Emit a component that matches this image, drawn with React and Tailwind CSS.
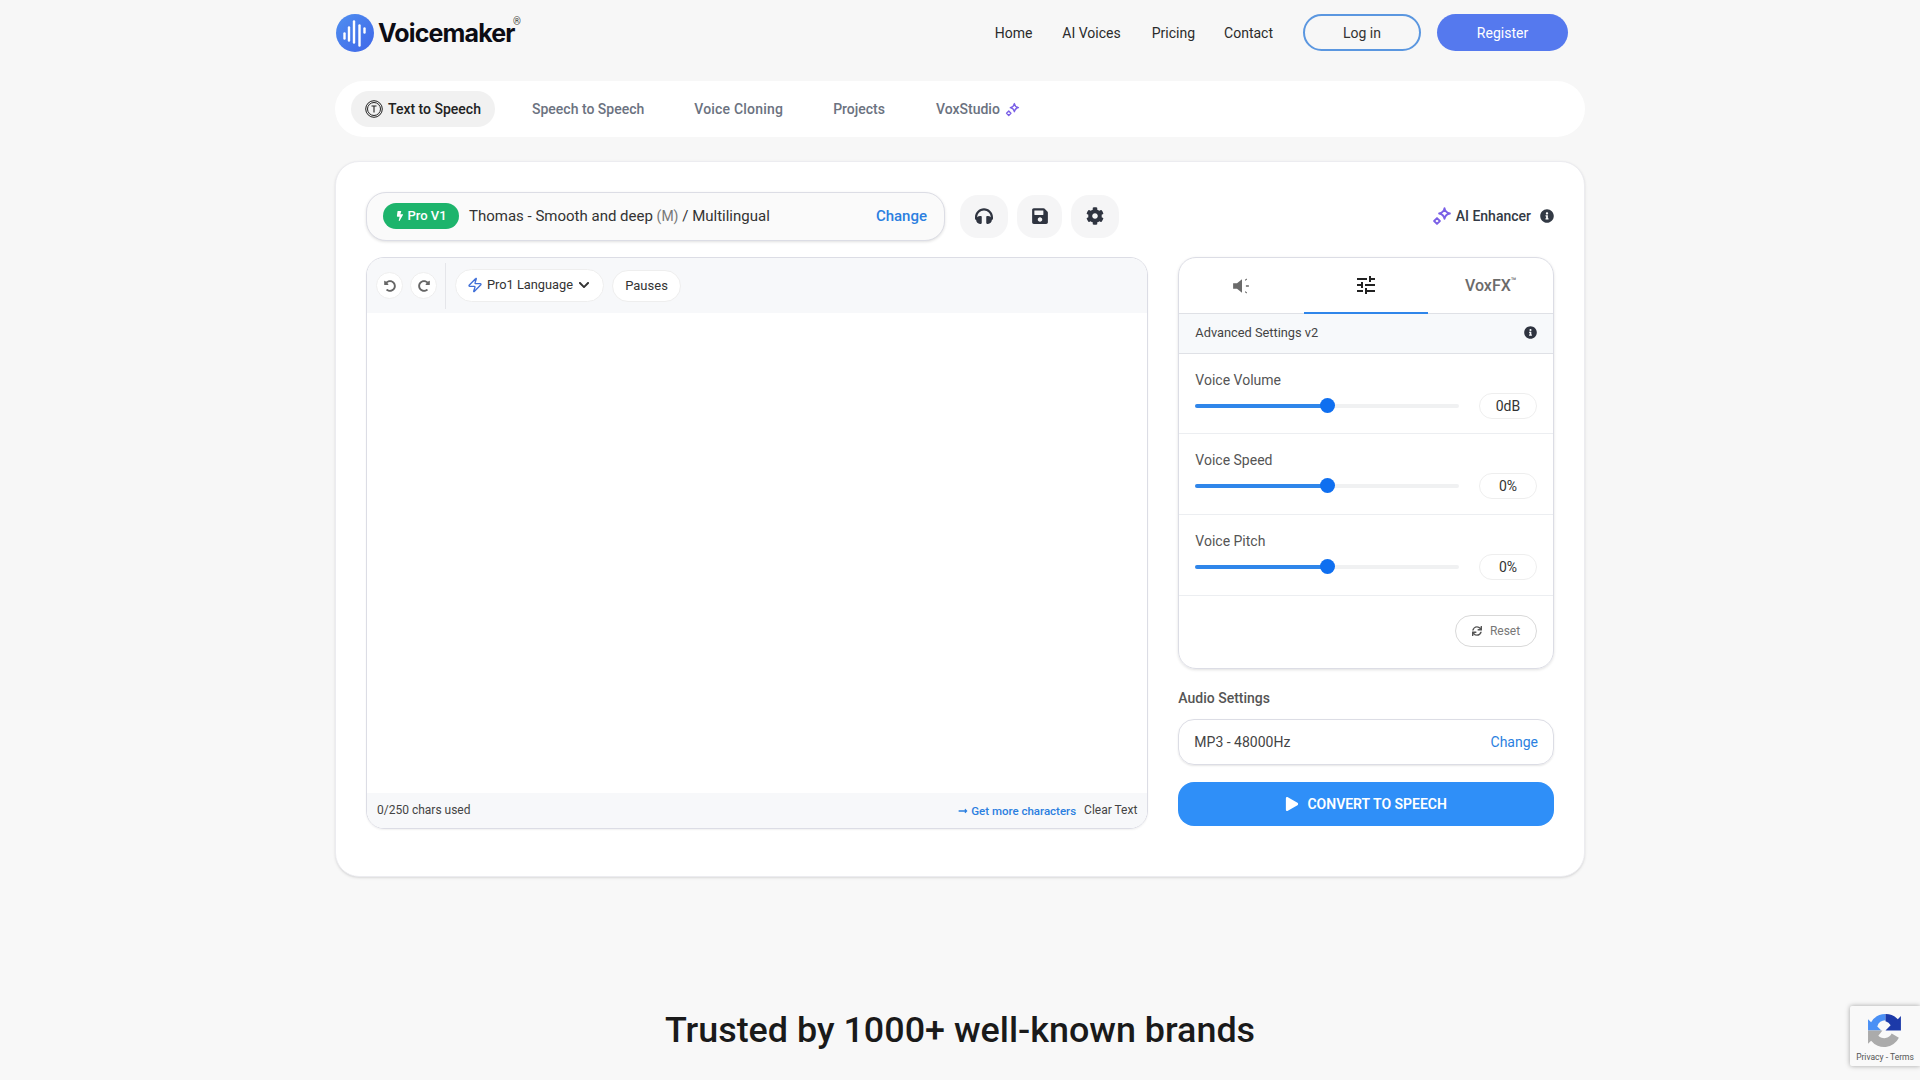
import React from 'react';
import { FaHeadphones, FaSave, FaCog, FaInfoCircle, FaSync, FaPlay, FaLongArrowAltRight, FaChevronDown, FaBolt, FaUndoAlt, FaRedoAlt } from 'react-icons/fa';
import { MdTune } from 'react-icons/md';
import { Zap } from 'lucide-react';

const Sparkle = ({ className }) => (
    <svg viewBox="0 0 24 24" className={className} fill="none" stroke="currentColor" strokeWidth="2.2" strokeLinejoin="round">
        <path d="M15 2.5c.6 3.6 2.5 5.7 6.5 6.5-4 .8-5.9 2.9-6.5 6.5-.6-3.6-2.5-5.7-6.5-6.5 4-.8 5.9-2.9 6.5-6.5z" />
        <path d="M6 14.5l3.5 3.5-3.5 3.5-3.5-3.5z" />
    </svg>
);

const LogoMark = () => (
    <svg viewBox="0 0 38 38" className="w-[38px] h-[38px] shrink-0">
        <defs>
            <linearGradient id="logoFill" x1="0" y1="0" x2="1" y2="1">
                <stop offset="0" stopColor="#4f8ff0" />
                <stop offset="1" stopColor="#3f66e8" />
            </linearGradient>
        </defs>
        <circle cx="19" cy="19" r="19" fill="url(#logoFill)" />
        <g stroke="#fff" strokeWidth="2.4" strokeLinecap="round">
            <path d="M8.5 19.5v5" />
            <path d="M13 13.5v13" />
            <path d="M18 7.5v21" />
            <path d="M23.5 11.5v20" />
            <path d="M28.5 14.5v4" />
        </g>
    </svg>
);

const TextCircle = () => (
    <svg viewBox="0 0 18 18" className="w-[18px] h-[18px]" fill="none" stroke="#222">
        <circle cx="9" cy="9" r="8.3" strokeWidth="1" />
        <circle cx="9" cy="9" r="6.5" strokeWidth="1" />
        <path d="M6.5 6h5M9 6v6.5" strokeWidth="1.1" />
    </svg>
);

const VolumeIcon = () => (
    <svg viewBox="0 0 18 18" className="w-5 h-5" fill="#6b6b6b">
        <path d="M1 6.5h3.5L9 3v12l-4.5-3.500H1z" />
        <path d="M11.5 3.5l1.5-1.2.6.8-1.5 1.2zM12.5 8.4h2.7v1.2h-2.700zM11.5 14.5l1.500 1.200.6-.8-1.500-1.200z" />
    </svg>
);

const sliders = [
    { label: 'Voice Volume', value: '0dB', rowClass: 'h-[80px]' },
    { label: 'Voice Speed', value: '0%', rowClass: 'h-[81px]' },
    { label: 'Voice Pitch', value: '0%', rowClass: 'h-[81px]' },
];

const App = () => {
    return (
        <div className="relative h-[1080px] overflow-hidden bg-[linear-gradient(#f7f7f7_710px,#f8f8f8_710px)] font-['Roboto',sans-serif]">
            <div className="w-[1250px] ml-[335px]">
                {/* header */}
                <header className="h-[65px] flex items-center">
                    <div className="ml-px flex items-center gap-[4px] relative">
                        <LogoMark />
                        <span className="pt-[2px] font-['Inter',sans-serif] font-bold text-[25px] tracking-[-0.85px] text-[#0c0c14]">Voicemaker</span>
                        <span className="absolute left-[177px] top-[1px] text-[10px] text-[#444]">®</span>
                    </div>
                    <nav className="ml-auto flex items-center text-sm text-[#2b2b2b] mr-[17px]">
                        <a className="mr-[30px]">Home</a>
                        <a className="mr-[31px]">AI Voices</a>
                        <a className="mr-[29px]">Pricing</a>
                        <a className="mr-[30px]">Contact</a>
                        <button className="w-[118px] h-[37px] rounded-full border-2 border-[#5b97e0] text-sm text-[#333] mr-4">Log in</button>
                        <button className="w-[131px] h-[37px] rounded-full bg-[#5579ee] text-sm text-white">Register</button>
                    </nav>
                </header>

                {/* product tabs */}
                <div className="mt-4 h-14 bg-white rounded-[28px] flex items-center pl-4 text-sm font-medium text-[#6b7280]">
                    <div className="h-[36px] w-[144px] rounded-full bg-[#f1f1f1] flex items-center justify-center gap-[5px] text-[#222]">
                        <TextCircle />
                        <span>Text to Speech</span>
                    </div>
                    <span className="ml-[37px]">Speech to Speech</span>
                    <span className="ml-[50px] tracking-[0.2px]">Voice Cloning</span>
                    <span className="ml-[50px]">Projects</span>
                    <span className="ml-[51px] flex items-center gap-[5px]">
                        VoxStudio
                        <Sparkle className="w-[15px] h-[15px] text-[#7a5fe6]" />
                    </span>
                </div>

                {/* main card */}
                <div className="mt-6 h-[716px] bg-white rounded-[24px] border border-[#ececf0] shadow-sm pt-[29px] px-[30px]">
                    <div className="flex items-center h-[50px]">
                        <div className="w-[579px] h-[49px] rounded-[20px] border border-[#dcdde5] bg-[#fafafa] shadow-[0_1px_3px_rgba(0,0,0,0.12)] flex items-center pl-4 pr-[17px]">
                            <span className="w-[76px] h-[26px] rounded-full bg-[#1db46c] text-white text-[13px] font-medium flex items-center justify-center gap-[2px]">
                                <FaBolt className="w-[10px] h-[10px]" /> Pro V1
                            </span>
                            <span className="ml-[10px] text-[15px] text-[#333]">
                                Thomas - Smooth and deep <span className="text-[#777] text-[14px]">(M)</span> / Multilingual
                            </span>
                            <span className="ml-auto text-[15px] font-medium text-[#2b7fe0]">Change</span>
                        </div>
                        <div className="ml-[15px] flex items-center gap-[9px]">
                            <span className="w-[48px] h-[43px] rounded-[18px] bg-[#f5f5f6] flex items-center justify-center text-[#2f3440]"><FaHeadphones className="w-[18px] h-[18px]" /></span>
                            <span className="w-[45px] h-[43px] rounded-[18px] bg-[#f5f5f6] flex items-center justify-center text-[#2f3440]"><FaSave className="w-[18px] h-[18px]" /></span>
                            <span className="w-[48px] h-[43px] rounded-[18px] bg-[#f5f5f6] flex items-center justify-center text-[#2f3440]"><FaCog className="w-[18px] h-[18px]" /></span>
                        </div>
                        <div className="ml-auto flex items-center text-sm font-medium text-[#333a45]">
                            <Sparkle className="w-[20px] h-[20px] text-[#7a5fe6] mr-[4px]" />
                            AI Enhancer
                            <FaInfoCircle className="w-[14px] h-[14px] ml-[9px]" />
                        </div>
                    </div>

                    <div className="mt-[16px] flex items-start">
                        {/* editor */}
                        <div className="w-[783px] h-[572px] rounded-[18px] border border-[#dcdde5] overflow-hidden flex flex-col shadow-[0_1px_2px_rgba(0,0,0,0.06)]">
                            <div className="h-[55px] bg-[#f7f8fa] flex items-center pl-[9px]">
                                <span className="w-[27px] h-[27px] rounded-full bg-white border border-[#eeeeee] flex items-center justify-center text-[#666]"><FaUndoAlt className="w-3 h-3" /></span>
                                <span className="ml-[7px] w-[27px] h-[27px] rounded-full bg-white border border-[#eeeeee] flex items-center justify-center text-[#666]"><FaRedoAlt className="w-3 h-3" /></span>
                                <span className="ml-[8px] w-px h-[46px] bg-[#e5e6ea]" />
                                <span className="ml-[9px] -mt-px w-[149px] h-[33px] rounded-full bg-white border border-[#eeeeee] flex items-center pl-[11px] gap-[4px] text-[12.8px] text-[#333]">
                                    <Zap className="w-4 h-4 text-[#3f6fd8]" />
                                    Pro1 Language
                                    <FaChevronDown className="w-[12px] h-[12px] ml-[1px]" />
                                </span>
                                <span className="ml-[8px] w-[69px] h-[32px] mt-[1px] rounded-full bg-white border border-[#eeeeee] flex items-center justify-center text-[13px] text-[#333]">Pauses</span>
                            </div>
                            <div className="flex-1 bg-white" />
                            <div className="h-[35px] bg-[#f7f8fa] flex items-center px-[10px] pb-[2px] text-xs text-[#444]">
                                <span>0/250 chars used</span>
                                <span className="ml-auto mt-[4px] flex items-center gap-[3px] text-[11.5px] font-medium text-[#2b7fe0]">
                                    <FaLongArrowAltRight className="w-[10px] h-[10px]" />
                                    Get more characters
                                </span>
                                <span className="ml-2">Clear Text</span>
                            </div>
                        </div>

                        {/* right panel */}
                        <div className="ml-[30px] w-[376px]">
                            <div className="h-[412px] rounded-[18px] border border-[#dcdde5] shadow-[0_1px_3px_rgba(0,0,0,0.12)] overflow-hidden">
                                <div className="h-[56px] flex border-b border-[#dfe1e6]">
                                    <div className="flex-1 flex items-center justify-center"><VolumeIcon /></div>
                                    <div className="flex-1 flex items-center justify-center border-b-2 border-[#2f86ea] h-[56px]"><MdTune className="w-[24px] h-[24px] text-[#222]" /></div>
                                    <div className="flex-1 flex items-center justify-center text-[16px] font-medium text-[#6b6b6b]">VoxFX<sup className="text-[9px]">™</sup></div>
                                </div>
                                <div className="h-[40px] bg-[#f7f9fb] border-b border-[#dfe1e6] flex items-center justify-between px-4 pb-[2px] text-[12.8px] text-[#444]">
                                    Advanced Settings v2
                                    <FaInfoCircle className="w-[13px] h-[13px] text-[#2f3440]" />
                                </div>
                                {sliders.map((s) => (
                                    <div key={s.label} className={`${s.rowClass} border-b border-[#eceef1] px-4 pt-[18px]`}>
                                        <div className="text-sm leading-[16px] text-[#555]">{s.label}</div>
                                        <div className="mt-[5px] flex items-center">
                                            <div className="relative w-[264px] h-[4px] rounded-full bg-[#f0f1f2]">
                                                <div className="h-full w-[132px] rounded-full bg-[#2f86ea]" />
                                                <div className="absolute left-[125px] top-[-6px] w-[15px] h-[15px] rounded-full bg-[#0f6ff0]" />
                                            </div>
                                            <div className="ml-auto w-[58px] h-[26px] rounded-full border border-[#eeeeee] flex items-center justify-center text-sm text-[#333]">{s.value}</div>
                                        </div>
                                    </div>
                                ))}
                                <div className="flex justify-end pr-4 pt-[19px]">
                                    <span className="w-[82px] h-[32px] rounded-full border border-[#d9d9d9] flex items-center justify-center gap-[8px] text-xs text-[#777]">
                                        <FaSync className="w-[10px] h-[10px] text-[#555]" /> Reset
                                    </span>
                                </div>
                            </div>

                            <div className="mt-[21px] text-sm font-medium leading-[16px] text-[#555]">Audio Settings</div>
                            <div className="mt-[13px] h-[46px] rounded-[16px] border border-[#dcdde5] shadow-[0_1px_2px_rgba(0,0,0,0.1)] flex items-center justify-between px-[15px] text-sm text-[#444]">
                                <span>MP3 - 48000Hz</span>
                                <span className="text-[#2b7fe0]">Change</span>
                            </div>
                            <button className="mt-[17px] w-full h-[44px] rounded-[16px] bg-[#2f8ff8] flex items-center justify-center gap-[8px] text-sm font-semibold text-white">
                                <FaPlay className="w-[14px] h-[14px]" />
                                CONVERT TO SPEECH
                            </button>
                        </div>
                    </div>
                </div>

                <h2 className="mt-[131px] text-center text-[35.9px] leading-[44px] font-medium text-[#1a1a1a]">Trusted by 1000+ well-known brands</h2>
            </div>

            {/* recaptcha badge */}
            <div className="absolute right-0 top-[1006px] w-[70px] h-[60px] bg-[#f9f9f9] rounded-l-[2px] shadow-[0_0_5px_rgba(0,0,0,0.35)] flex flex-col items-center pt-[6px]">
                <svg viewBox="0 0 36 36" className="w-[37px] h-[37px]">
                    <path d="M18 2a16 16 0 0 0-14 8l-3-3v11h13l-4-4a8 8 0 0 1 8-6z" fill="#4a90f5" />
                    <path d="M18 2a16 16 0 0 1 12 5l3-3v14H18l5-5a8 8 0 0 0-5-4z" fill="#1c3aa9" />
                    <path d="M1 18v13l3-3a16 16 0 0 0 27-3l-7-4a8 8 0 0 1-13 2l4-5z" fill="#ababab" />
                </svg>
                <span className="mt-[3px] text-[8.5px] leading-[10px] text-[#555] whitespace-nowrap">Privacy - Terms</span>
            </div>
        </div>
    );
};

export default App;
